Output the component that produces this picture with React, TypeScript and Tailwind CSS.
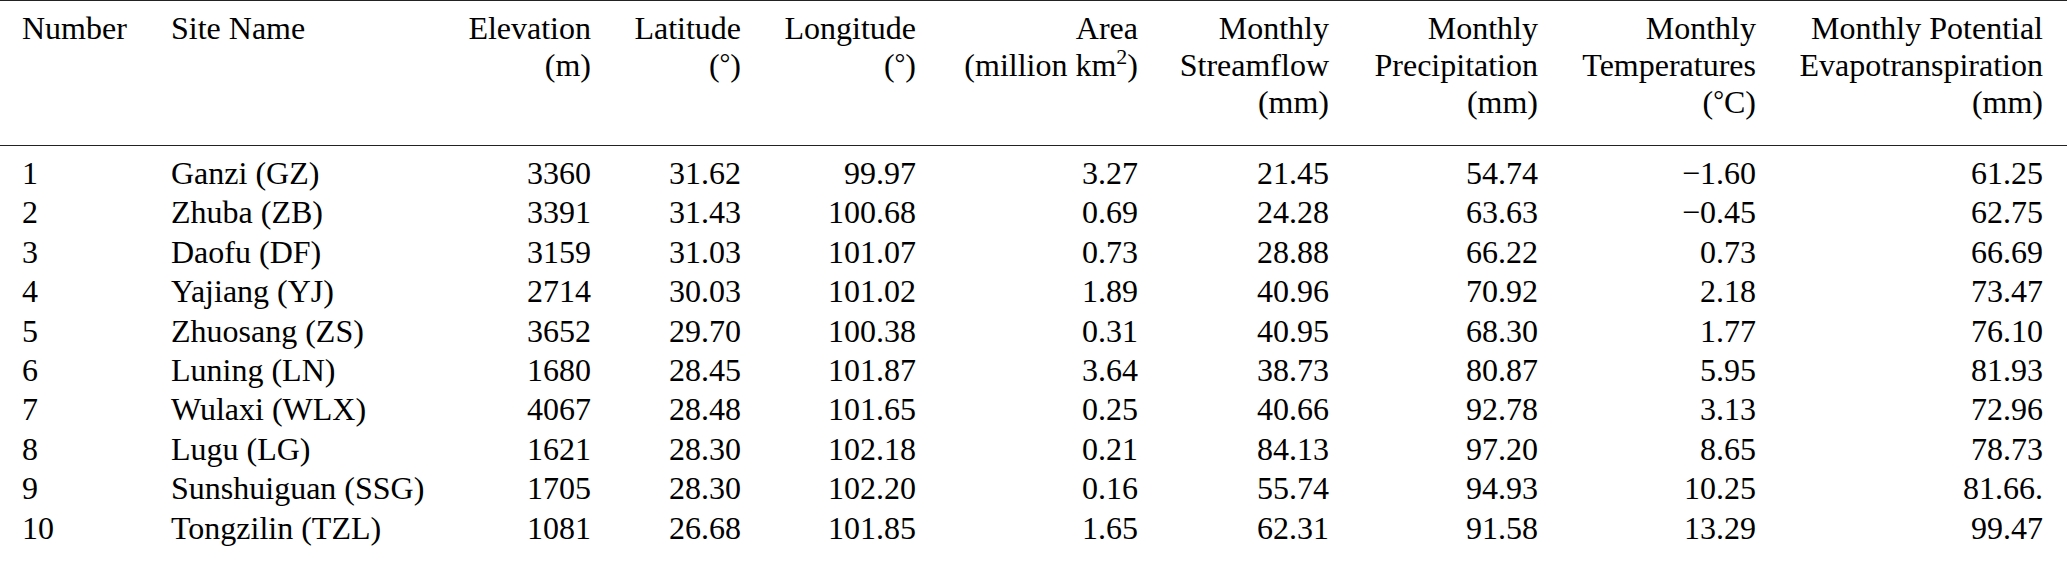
import React from "react";

const rows: string[][] = [
  ["1", "Ganzi (GZ)", "3360", "31.62", "99.97", "3.27", "21.45", "54.74", "\u22121.60", "61.25"],
  ["2", "Zhuba (ZB)", "3391", "31.43", "100.68", "0.69", "24.28", "63.63", "\u22120.45", "62.75"],
  ["3", "Daofu (DF)", "3159", "31.03", "101.07", "0.73", "28.88", "66.22", "0.73", "66.69"],
  ["4", "Yajiang (YJ)", "2714", "30.03", "101.02", "1.89", "40.96", "70.92", "2.18", "73.47"],
  ["5", "Zhuosang (ZS)", "3652", "29.70", "100.38", "0.31", "40.95", "68.30", "1.77", "76.10"],
  ["6", "Luning (LN)", "1680", "28.45", "101.87", "3.64", "38.73", "80.87", "5.95", "81.93"],
  ["7", "Wulaxi (WLX)", "4067", "28.48", "101.65", "0.25", "40.66", "92.78", "3.13", "72.96"],
  ["8", "Lugu (LG)", "1621", "28.30", "102.18", "0.21", "84.13", "97.20", "8.65", "78.73"],
  ["9", "Sunshuiguan (SSG)", "1705", "28.30", "102.20", "0.16", "55.74", "94.93", "10.25", "81.66."],
  ["10", "Tongzilin (TZL)", "1081", "26.68", "101.85", "1.65", "62.31", "91.58", "13.29", "99.47"],
];

const grid =
  "grid grid-cols-[171px_259px_161px_150px_175px_222px_191px_209px_218px_287px] pr-[24px]";

function Deg() {
  return <span className="relative top-[-4px] text-[27px]">{"\u00B0"}</span>;
}

export default function App() {
  return (
    <div className="w-[2067px] h-[561px] bg-white text-black font-['Liberation_Serif','Times_New_Roman',serif]">
      <div className="border-t border-b border-[#222] text-[32px]">
        {/* Header */}
        <div className={`${grid} leading-[37px] pt-[9px] pb-[22px] border-b border-[#222]`}>
          <div className="pl-[22px]">Number</div>
          <div>Site Name</div>
          <div className="text-right">
            <div>Elevation</div>
            <div>(m)</div>
          </div>
          <div className="text-right">
            <div>Latitude</div>
            <div>
              (<Deg />)
            </div>
          </div>
          <div className="text-right">
            <div>Longitude</div>
            <div>
              (<Deg />)
            </div>
          </div>
          <div className="text-right">
            <div>Area</div>
            <div>
              (million km
              <span className="relative top-[-0.55em] text-[22px] leading-none">2</span>)
            </div>
          </div>
          <div className="text-right">
            <div>Monthly</div>
            <div>Streamflow</div>
            <div>(mm)</div>
          </div>
          <div className="text-right">
            <div>Monthly</div>
            <div>Precipitation</div>
            <div>(mm)</div>
          </div>
          <div className="text-right">
            <div>Monthly</div>
            <div>Temperatures</div>
            <div>
              (<Deg />C)
            </div>
          </div>
          <div className="text-right">
            <div>Monthly Potential</div>
            <div>Evapotranspiration</div>
            <div>(mm)</div>
          </div>
        </div>
        {/* Body */}
        <div className="pt-[8px] pb-[13px] leading-[39.4px]">
          {rows.map((r) => (
            <div key={r[0]} className={grid}>
              <div className="pl-[22px]">{r[0]}</div>
              <div>{r[1]}</div>
              {r.slice(2).map((v, i) => (
                <div key={i} className="text-right">
                  {v}
                </div>
              ))}
            </div>
          ))}
        </div>
      </div>
    </div>
  );
}
